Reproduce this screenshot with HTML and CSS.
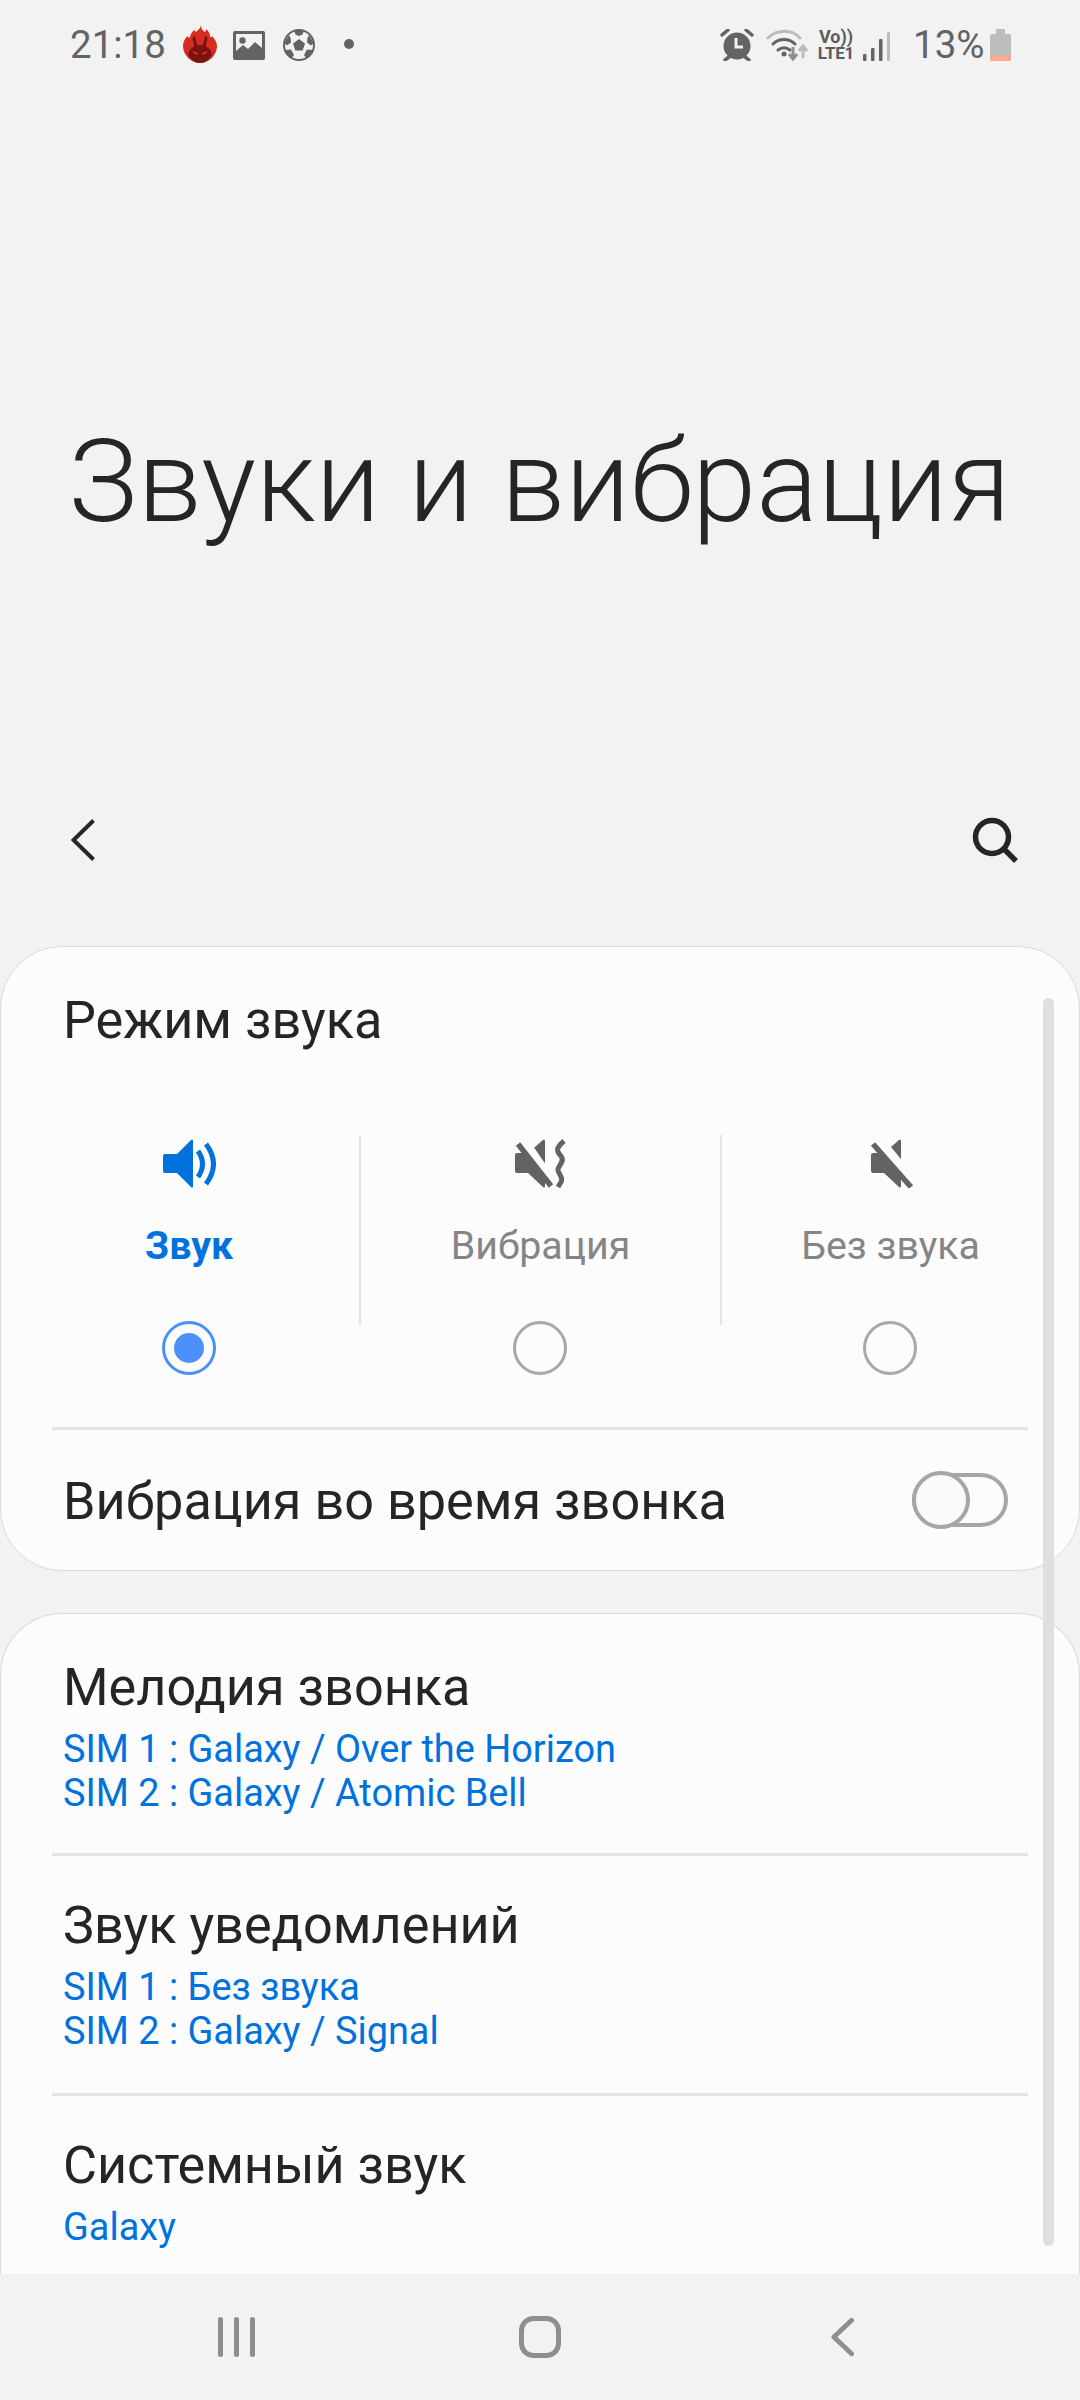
FILE: index.html
```html
<!DOCTYPE html>
<html lang="ru">
<head>
<meta charset="utf-8">
<title>Звуки и вибрация</title>
<link rel="stylesheet" href="styles.css">
</head>
<body>
<div class="screen">
  <header class="status">
    <div class="status-left">
      <span class="clock">21:18</span>
      <svg class="ic-flame" viewBox="0 0 34 38"><path fill="#d62d20" d="M18 0c0 4 2 6 4 7 1-1 1-2 1-3 3 2 4 5 4 8 1 0 2 0 2-1 3 3 5 7 5 10 0 9-8 17-17 17S0 30 0 21c0-4 2-8 5-10 0 1 1 2 2 2 0-3 2-7 5-8 0 1 0 2 1 2 2-2 5-4 5-7z"/><path fill="#7a1410" d="M5 29c1-5 6-9 12-9s11 4 12 9c-2 5-6 9-12 9S7 34 5 29z"/><path stroke="#7a1410" stroke-width="3" stroke-linecap="round" fill="none" d="M11 13l2 9M23 13l-2 9"/><path fill="#d62d20" d="M10 26l5 2-1 2-4-2zM24 26l-5 2 1 2 4-2z"/></svg>
      <svg class="ic-image" viewBox="0 0 32 29"><rect width="32" height="29" rx="2" fill="#636363"/><rect x="3" y="3" width="26" height="23" fill="#f2f2f2"/><circle cx="9.500" cy="9.500" r="3.200" fill="#636363"/><path fill="#636363" d="M3 20l7-6 5 4 7-7 7 6v9H3z"/></svg>
      <svg class="ic-ball" viewBox="0 0 32 32"><circle cx="16" cy="16" r="15" fill="#f2f2f2" stroke="#636363" stroke-width="2"/><path fill="#636363" d="M16 10l6 4.500-2.300 7h-7.400l-2.300-7zM11 1.500h10l-1.500 4L16 7l-3.500-1.500zM26 6l5 8-3 2.500-4-3 .5-4.500zM6 6l-5 8 3 2.500 4-3-.5-4.500zM2 21l6-.5 3 5.500-2.500 3.500C5 27 3 24.500 2 21zM30 21l-6-.5-3 5.500 2.500 3.500c3.500-2.500 5.500-5 6.500-9z"/></svg>
      <span class="dot"></span>
    </div>
    <div class="status-right">
      <svg class="ic-alarm" viewBox="0 0 34 32"><circle cx="17" cy="17" r="13.500" fill="#636363"/><path d="M16 9v9h7" fill="none" stroke="#f2f2f2" stroke-width="3"/><path d="M2 6l6-5M32 6l-6-5M5 31l4-3M29 31l-4-3" stroke="#636363" stroke-width="3.500" stroke-linecap="round"/></svg>
      <svg class="ic-wifi" viewBox="0 0 42 32"><g fill="none" stroke-width="3" stroke-linecap="round"><path d="M2 9C11 0 26 0 34 9" stroke="#bcbcbc"/><path d="M7 15c6-6 16-6 22 0M12 21c4-3 8-3 12 0" stroke="#636363"/></g><circle cx="18" cy="25" r="2.500" fill="#636363"/><path d="M27 18v11M23 25l4 5 4-5" fill="none" stroke="#8f8f8f" stroke-width="3"/><path d="M37 29V19M33 22l4-5 4 5" fill="none" stroke="#bcbcbc" stroke-width="3"/></svg>
      <div class="volte"><span class="vo">Vo))</span><span class="lte">LTE1</span></div>
      <svg class="ic-signal" viewBox="0 0 27 29"><rect y="22" width="3.500" height="7" rx="1" fill="#636363"/><rect x="8" y="16" width="3.500" height="13" rx="1" fill="#636363"/><rect x="16" y="7" width="3.500" height="22" rx="1" fill="#636363"/><rect x="24" width="3" height="29" rx="1" fill="#bcbcbc"/></svg>
      <span class="percent">13%</span>
      <svg class="ic-battery" viewBox="0 0 21 32"><rect x="6" width="9" height="6" rx="1" fill="#bdbdbd"/><rect y="5" width="21" height="27" rx="2" fill="#bdbdbd"/><path d="M0 27h21v3a2 2 0 0 1-2 2H2a2 2 0 0 1-2-2z" fill="#ffa78f"/></svg>
    </div>
  </header>

  <div class="hero"><h1 class="hero-title">Звуки и вибрация</h1></div>

  <div class="toolbar">
    <svg class="ic-back" viewBox="0 0 24 42"><path d="M22.500 1.500L2.500 21l20 19.500" fill="none" stroke="#252525" stroke-width="4"/></svg>
    <svg class="ic-search" viewBox="0 0 46 46"><circle cx="20" cy="20" r="16.500" fill="none" stroke="#252525" stroke-width="5.500"/><path d="M32 32l12 12" stroke="#252525" stroke-width="5.500"/></svg>
  </div>

  <main class="content">
    <section class="card card-mode">
      <h2 class="item-title heading">Режим звука</h2>
      <div class="modes">
        <div class="mode">
          <div class="mode-top">
            <svg class="ic-mode ic-sound" viewBox="0 0 56 49"><path fill="#0072de" d="M3 15h12L29 1q2-1.500 2 1v45q0 2.500-2 1L15 34H3q-2 0-2-2V17q0-2 2-2z"/><path d="M36 12q9 13 0 26M44 5q15 20 0 40" fill="none" stroke="#0072de" stroke-width="5"/></svg>
            <span class="mode-label is-active">Звук</span>
          </div>
          <span class="radio is-on"></span>
        </div>
        <div class="mode">
          <div class="mode-top is-split">
            <svg class="ic-mode ic-vib" viewBox="0 0 54 49"><path fill="#636363" d="M3 14h11L29 1q2-1.500 2 1v45q0 2.500-2 1L14 34H3q-2 0-2-2V16q0-2 2-2z"/><path d="M8 0l32 46" stroke="#fcfcfc" stroke-width="10"/><path d="M4 5l33 42" stroke="#636363" stroke-width="5.500"/><path d="M50 2C42 9 42 12 47 17c4 5-2 9-3 13-1 4 6 8 3 13l-3 5" fill="none" stroke="#636363" stroke-width="5"/></svg>
            <span class="mode-label">Вибрация</span>
          </div>
          <span class="radio"></span>
        </div>
        <div class="mode">
          <div class="mode-top is-split">
            <svg class="ic-mode ic-mute" viewBox="0 0 46 49"><path fill="#636363" d="M3 14h11L29 1q2-1.500 2 1v45q0 2.500-2 1L14 34H3q-2 0-2-2V16q0-2 2-2z"/><path d="M8 0l36 44" stroke="#fcfcfc" stroke-width="10"/><path d="M3 5l38 43" stroke="#636363" stroke-width="5.500"/></svg>
            <span class="mode-label">Без звука</span>
          </div>
          <span class="radio"></span>
        </div>
      </div>
      <div class="rule"></div>
      <div class="toggle-row">
        <span class="item-title toggle-label">Вибрация во время звонка</span>
        <span class="switch"><span class="knob"></span></span>
      </div>
    </section>

    <section class="card card-list">
      <div class="row">
        <div class="item-title">Мелодия звонка</div>
        <div class="item-sub">SIM 1 : Galaxy / Over the Horizon</div>
        <div class="item-sub">SIM 2 : Galaxy / Atomic Bell</div>
      </div>
      <div class="rule"></div>
      <div class="row">
        <div class="item-title">Звук уведомлений</div>
        <div class="item-sub">SIM 1 : Без звука</div>
        <div class="item-sub">SIM 2 : Galaxy / Signal</div>
      </div>
      <div class="rule"></div>
      <div class="row">
        <div class="item-title">Системный звук</div>
        <div class="item-sub">Galaxy</div>
      </div>
    </section>
    <div class="scrollbar"></div>
  </main>

  <nav class="navbar">
    <svg class="ic-recents" viewBox="0 0 37 40"><path d="M2.500 2.500v35M18.500 2.500v35M34.500 2.500v35" stroke="#8e8e8e" stroke-width="5" stroke-linecap="round"/></svg>
    <svg class="ic-home" viewBox="0 0 42 42"><rect x="2.500" y="2.500" width="37" height="37" rx="12" fill="none" stroke="#8e8e8e" stroke-width="5"/></svg>
    <svg class="ic-nav-back" viewBox="0 0 24 40"><path d="M21.500 2.500L3 20l18.500 17.500" fill="none" stroke="#8e8e8e" stroke-width="5" stroke-linecap="round" stroke-linejoin="round"/></svg>
  </nav>
</div>
</body>
</html>
```
FILE: styles.css
```css
* { box-sizing: border-box; margin: 0; padding: 0; }
html, body { width: 1080px; height: 2400px; overflow: hidden; }
body { background: #f2f2f2; font-family: Roboto, "Noto Sans", sans-serif; color: #252525; }
svg { display: block; flex: none; }

.screen { width: 1080px; height: 2400px; display: flex; flex-direction: column; }

/* Status bar */
.status { height: 90px; flex: none; display: flex; justify-content: space-between; align-items: center; padding: 0 69px 0 70px; color: #636363; }
.status-left, .status-right { display: flex; align-items: center; }
.clock { font-size: 38.500px; line-height: 44px; width: 113px; }
.ic-flame { width: 34px; height: 38px; margin-right: 16px; margin-top: -2px; }
.ic-image { width: 32px; height: 29px; margin-right: 18px; margin-top: 1px; }
.ic-ball { width: 32px; height: 32px; margin-right: 29px; }
.dot { width: 10px; height: 10px; border-radius: 50%; background: #636363; margin-top: -2px; margin-right: 72px; }
.ic-alarm { width: 34px; height: 32px; margin-right: 12px; }
.ic-wifi { width: 42px; height: 32px; margin-right: 8px; }
.volte { width: 40px; margin-right: 7px; display: flex; flex-direction: column; align-items: center; font-weight: 700; color: #5c5c5c; }
.vo { font-size: 18px; line-height: 17px; }
.lte { font-size: 17px; line-height: 17px; letter-spacing: -.2px; }
.ic-signal { width: 27px; height: 29px; margin-right: 23px; margin-top: 2px; }
.percent { font-size: 38.500px; line-height: 44px; width: 77px; white-space: nowrap; }
.ic-battery { width: 21px; height: 32px; }

/* Title */
.hero { height: 700px; flex: none; padding: 330px 0 0 69px; }
.hero-title { font-weight: 300; font-size: 115px; line-height: 124px; white-space: nowrap; color: #252525; }

/* Toolbar */
.toolbar { height: 100px; flex: none; display: flex; justify-content: space-between; align-items: center; padding: 0 62px 0 71px; margin-bottom: 56px; }
.ic-back { width: 24px; height: 42px; }
.ic-search { width: 46px; height: 46px; }

/* Cards */
.content { flex: 1; min-height: 0; position: relative; overflow: hidden; display: flex; flex-direction: column; gap: 42px; }
.card { background: #fcfcfc; border: 1px solid #dadada; border-radius: 62px; flex: none; }
.card-mode { height: 625px; }
.card-list { flex: 1; min-height: 0; overflow: hidden; border-radius: 62px 62px 0 0; border-bottom: 0; padding-top: 44px; }

.item-title { font-size: 52.200px; line-height: 60px; color: #252525; white-space: nowrap; }
.heading { font-weight: 400; padding: 44px 0 0 62px; height: 188px; }

.modes { display: grid; grid-template-columns: 340px 361px 339px; padding-left: 18px; }
.mode { display: flex; flex-direction: column; align-items: center; }
.mode-top { width: 100%; height: 190px; display: flex; flex-direction: column; align-items: center; padding-top: 4px; }
.is-split { border-left: 2px solid #e4e4e4; }
.ic-mode { height: 49px; }
.ic-sound { width: 56px; margin-left: 2px; }
.ic-vib { width: 54px; }
.ic-mute { width: 46px; margin-left: 5px; }
.mode-label { font-size: 39.300px; line-height: 44px; margin-top: 36px; color: #858585; }
.is-active { color: #0072de; font-weight: 700; }

.radio { width: 54px; height: 54px; border-radius: 50%; border: 3px solid #a8a8a8; margin-top: -4px; display: flex; align-items: center; justify-content: center; }
.radio.is-on { border-color: #4a90f8; }
.radio.is-on::after { content: ""; width: 30px; height: 30px; border-radius: 50%; background: #4a90f8; }

.rule { height: 3px; margin: 0 51px; background: #e6e6e6; }
.card-mode .rule { margin-top: 52px; }

.toggle-row { height: 139px; display: flex; justify-content: space-between; align-items: center; padding: 0 71px 0 62px; }
.toggle-label { margin-top: 5px; }
.switch { width: 96px; height: 54px; border: 4px solid #a6a6a6; border-radius: 27px; position: relative; display: block; }
.knob { position: absolute; left: -4px; top: -6px; width: 58px; height: 58px; border-radius: 50%; border: 4px solid #a6a6a6; background: #fafafa; }

.row { height: 237px; padding: 40px 62px 0; }
.row:first-child { height: 195px; padding-top: 0; }
.item-sub { font-size: 37.900px; line-height: 44px; color: #0072de; white-space: nowrap; }
.item-title + .item-sub { margin-top: 9px; }

.scrollbar { position: absolute; left: 1043px; top: 52px; width: 11px; height: 1248px; border-radius: 6px; background: #dfdfdf; }

/* Navigation */
.navbar { height: 126px; flex: none; position: relative; display: grid; grid-template-columns: 218px 37px 264px 42px 270px 23px; align-items: center; padding-bottom: 0; }
.ic-recents { grid-column: 2; width: 37px; height: 40px; }
.ic-home { grid-column: 4; width: 42px; height: 42px; }
.ic-nav-back { grid-column: 6; width: 23px; height: 40px; }
```
